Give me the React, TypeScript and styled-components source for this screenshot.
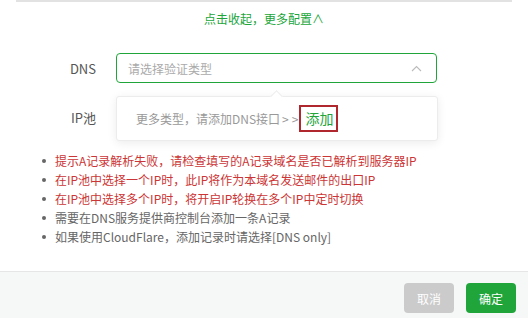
import React from "react";
import styled, { createGlobalStyle } from "styled-components";

const GlobalStyle = createGlobalStyle`
  html, body { margin: 0; padding: 0; background: #fff; }
  body {
    font-family: "Noto Sans CJK SC", "Noto Sans", "Liberation Sans", sans-serif;
    font-size: 12px;
    color: #555;
  }
  * { box-sizing: border-box; }
`;

const Page = styled.div`
  width: 528px;
  height: 318px;
  display: flex;
  flex-direction: column;
  overflow: hidden;
`;

const TopRule = styled.div`
  margin: 0 16px;
  border-top: 2px solid #e2e2e2;
`;

const Toggle = styled.div`
  margin-top: 9px;
  text-align: center;
  color: #20a53a;
  font-size: 12px;
  line-height: 16px;
  height: 16px;
`;

const Form = styled.div`
  margin-top: 26px;
  display: flex;
  flex-direction: column;
  gap: 19px;
`;

const Row = styled.div`
  display: grid;
  grid-template-columns: 96px 321px;
  column-gap: 20px;
  align-items: center;
  height: 30px;
`;

const Label = styled.div`
  text-align: right;
  font-size: 13px;
  color: #555;
`;

const Field = styled.div`
  position: relative;
  height: 30px;
`;

const Select = styled.div`
  height: 30px;
  border: 1px solid #20a53a;
  border-radius: 4px;
  display: flex;
  align-items: center;
  justify-content: space-between;
  padding: 0 14px 0 11px;
  color: #aaa;
  font-size: 12px;
`;

const Popover = styled.div`
  position: absolute;
  left: 0;
  right: -1px;
  top: 43px;
  height: 45px;
  background: #fff;
  border: 1px solid #ececec;
  border-radius: 3px;
  box-shadow: 0 2px 10px rgba(0, 0, 0, 0.08);
  display: flex;
  align-items: center;
  padding-left: 19px;
  color: #999;
  font-size: 12px;
  z-index: 2;
  &::before {
    content: "";
    position: absolute;
    top: -5px;
    left: 155px;
    width: 8px;
    height: 8px;
    background: #fff;
    border-left: 1px solid #ececec;
    border-top: 1px solid #ececec;
    transform: rotate(45deg);
  }
`;

const Arrows = styled.span`
  letter-spacing: 3px;
  margin-left: 2px;
`;

const AddLink = styled.span`
  color: #20a53a;
  font-size: 14px;
  outline: 2px solid #b0282e;
  outline-offset: 0;
  padding: 2px 3px 2px 4px;
  line-height: 19px;
`;

const Tips = styled.ul`
  margin: 19px 0 0;
  padding: 0 0 0 55px;
  list-style: none;
`;

const Tip = styled.li<{ $warn?: boolean }>`
  position: relative;
  line-height: 19px;
  font-size: 12px;
  color: ${(p) => (p.$warn ? "#cc3535" : "#666")};
  &::before {
    content: "";
    position: absolute;
    left: -13px;
    top: 8px;
    width: 4px;
    height: 4px;
    border-radius: 50%;
    background: #666;
  }
`;

const Footer = styled.div`
  margin-top: auto;
  height: 47px;
  border-top: 1px solid #e6e6e6;
  background: #f6f8f7;
  display: flex;
  justify-content: flex-end;
  align-items: flex-start;
  gap: 12px;
  padding: 11px 12px 0 0;
`;

const Button = styled.button<{ $primary?: boolean }>`
  width: 50px;
  height: 30px;
  border: none;
  border-radius: 4px;
  font-family: inherit;
  font-size: 12px;
  color: #fff;
  background: ${(p) => (p.$primary ? "#20a53a" : "#cbcbcb")};
`;

const Chevron = () => (
  <svg width="11" height="7" viewBox="0 0 11 7" fill="none">
    <path d="M1 6 L5.5 1.5 L10 6" stroke="#bbb" strokeWidth="1.1" />
  </svg>
);

export default function App() {
  return (
    <Page>
      <GlobalStyle />
      <TopRule />
      <Toggle>点击收起，更多配置∧</Toggle>
      <Form>
        <Row>
          <Label>DNS</Label>
          <Field>
            <Select>
              <span>请选择验证类型</span>
              <Chevron />
            </Select>
            <Popover>
              更多类型，请添加DNS接口<Arrows>&gt;&gt;</Arrows>
              <AddLink>添加</AddLink>
            </Popover>
          </Field>
        </Row>
        <Row>
          <Label>IP池</Label>
          <Field />
        </Row>
      </Form>
      <Tips>
        <Tip $warn>提示A记录解析失败，请检查填写的A记录域名是否已解析到服务器IP</Tip>
        <Tip $warn>在IP池中选择一个IP时，此IP将作为本域名发送邮件的出口IP</Tip>
        <Tip $warn>在IP池中选择多个IP时，将开启IP轮换在多个IP中定时切换</Tip>
        <Tip>需要在DNS服务提供商控制台添加一条A记录</Tip>
        <Tip>如果使用CloudFlare，添加记录时请选择[DNS only]</Tip>
      </Tips>
      <Footer>
        <Button>取消</Button>
        <Button $primary>确定</Button>
      </Footer>
    </Page>
  );
}
